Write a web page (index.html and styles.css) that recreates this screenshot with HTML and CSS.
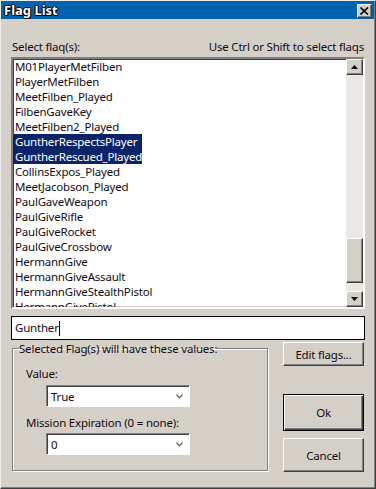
FILE: index.html
```html
<!DOCTYPE html>
<html lang="en">
<head>
    <meta charset="UTF-8">
    <title>Flag List</title>
    <link rel="stylesheet" href="styles.css">
</head>
<body>

    <div class="window">
        <div class="titlebar">
            <span class="title">Flag List</span>
            <div class="close">
                <svg width="9" height="8" viewBox="0 0 9 8">
                    <path d="M0.5 0.5 L8 7.5 M8 0.5 L0.5 7.5" stroke="#000" stroke-width="1.6"/>
                </svg>
            </div>
        </div>

        <div class="body">
            <div class="hint-row">
                <span>Select flaq(s):</span>
                <span>Use Ctrl or Shift to select flaqs</span>
            </div>

            <div class="listbox">
                <ul class="items">
                    <li>M01PlayerMetFilben</li>
                    <li>PlayerMetFilben</li>
                    <li>MeetFilben_Played</li>
                    <li>FilbenGaveKey</li>
                    <li>MeetFilben2_Played</li>
                    <li class="selected">GuntherRespectsPlayer</li>
                    <li class="selected">GuntherRescued_Played</li>
                    <li>CollinsExpos_Played</li>
                    <li>MeetJacobson_Played</li>
                    <li>PaulGaveWeapon</li>
                    <li>PaulGiveRifle</li>
                    <li>PaulGiveRocket</li>
                    <li>PaulGiveCrossbow</li>
                    <li>HermannGive</li>
                    <li>HermannGiveAssault</li>
                    <li>HermannGiveStealthPistol</li>
                    <li>HermannGivePistol</li>
                </ul>
                <div class="scrollbar">
                    <div class="sb-btn">
                        <svg width="7" height="4" viewBox="0 0 7 4"><path d="M3.5 0 L7 4 L0 4 Z" fill="#000"/></svg>
                    </div>
                    <div class="sb-track">
                        <div class="sb-thumb"></div>
                    </div>
                    <div class="sb-btn">
                        <svg width="7" height="4" viewBox="0 0 7 4"><path d="M0 0 L7 0 L3.5 4 Z" fill="#000"/></svg>
                    </div>
                </div>
            </div>

            <div class="search">Gunther<span class="caret"></span></div>

            <div class="lower">
                <fieldset class="group">
                    <legend>Selected Flag(s) will have these values:</legend>
                    <div class="field-label">Value:</div>
                    <div class="combo">
                        <span>True</span>
                        <svg width="7" height="5" viewBox="0 0 7 5"><path d="M0.5 0.8 L3.5 3.8 L6.5 0.8" fill="none" stroke="#666" stroke-width="1.4"/></svg>
                    </div>
                    <div class="field-label second">Mission Expiration (0 = none):</div>
                    <div class="combo">
                        <span>0</span>
                        <svg width="7" height="5" viewBox="0 0 7 5"><path d="M0.5 0.8 L3.5 3.8 L6.5 0.8" fill="none" stroke="#666" stroke-width="1.4"/></svg>
                    </div>
                </fieldset>

                <div class="buttons">
                    <div class="btn edit">Edit flags...</div>
                    <div class="btn ok">Ok</div>
                    <div class="btn cancel">Cancel</div>
                </div>
            </div>
        </div>
    </div>

</body>
</html>
```

FILE: styles.css
```css
body {
    margin: 0;
    background: #d4d0c8;
    font-family: "Noto Sans", "Open Sans", sans-serif;
    font-size: 11.5px;
    letter-spacing: -0.2px;
    color: #140a14;
}

.window {
    width: 376px;
    height: 489px;
    box-sizing: border-box;
    background: #d4d0c8;
    border-top: 1px solid #eeeeee;
    border-left: 1px solid #eeeeee;
    border-right: 1px solid #404040;
    border-bottom: 1px solid #404040;
    box-shadow: inset -1px -1px 0 #808080;
}

.titlebar {
    height: 18px;
    margin-right: 1px;
    background: #0063b1;
    display: flex;
    align-items: center;
    justify-content: space-between;
    padding: 0 2px 0 3px;
}

.title {
    color: #fff;
    font-weight: bold;
    font-size: 13px;
    letter-spacing: 0;
    line-height: 18px;
    text-shadow: 1px 1px 0 #000, -1px 0 0 #000, 1px 0 0 #000, 0 -1px 0 #000, 0 1px 0 #000;
}

.close {
    width: 15px;
    height: 14px;
    box-sizing: border-box;
    background: #d4d0c8;
    border: 1px solid;
    border-color: #fff #404040 #404040 #fff;
    box-shadow: inset -1px -1px 0 #808080;
    display: flex;
    align-items: center;
    justify-content: center;
    margin-top: 1px;
}

.body {
    padding: 20px 10px 0 10px;
}

.hint-row {
    display: flex;
    justify-content: space-between;
    line-height: 15px;
    padding: 0 1px 0 1px;
}

.listbox {
    margin-top: 3px;
    height: 252px;
    box-sizing: border-box;
    background: #fff;
    border: 2px solid;
    border-color: #808080 #fff #fff #808080;
    box-shadow: inset 1px 1px 0 #404040, inset -1px -1px 0 #d4d0c8;
    display: flex;
    overflow: hidden;
}

.items {
    flex: 1;
    list-style: none;
    margin: 0;
    padding: 0;
    overflow: hidden;
}

.items li {
    height: 15px;
    line-height: 15px;
    width: 127px;
    padding-left: 2px;
    white-space: nowrap;
}

.items li.selected {
    background: #0a246a;
    color: #fff;
}

.scrollbar {
    width: 17px;
    display: flex;
    flex-direction: column;
    background: #eae8e4;
}

.sb-btn {
    height: 16px;
    box-sizing: border-box;
    background: #d4d0c8;
    border: 1px solid;
    border-color: #fff #404040 #404040 #fff;
    box-shadow: inset -1px -1px 0 #808080;
    display: flex;
    align-items: center;
    justify-content: center;
}

.sb-track {
    flex: 1;
    padding-top: 163px;
}

.sb-thumb {
    height: 45px;
    box-sizing: border-box;
    background: #d4d0c8;
    border: 1px solid;
    border-color: #fff #404040 #404040 #fff;
    box-shadow: inset -1px -1px 0 #808080;
}

.search {
    margin-top: 7px;
    height: 24px;
    box-sizing: border-box;
    background: #fff;
    border: 1px solid #000;
    padding-left: 3px;
    line-height: 22px;
    display: flex;
    align-items: center;
}

.caret {
    width: 1px;
    height: 15px;
    background: #000;
}

.lower {
    display: flex;
    justify-content: space-between;
    align-items: flex-start;
    padding: 0 1px;
}

.group {
    margin: 1px 0 0 0;
    padding: 10px 13px 0 13px;
    width: 256px;
    height: 130px;
    box-sizing: border-box;
    border: 1px solid #808080;
    box-shadow: inset 1px 1px 0 #fff, 1px 1px 0 #fff;
}

.group legend {
    padding: 0;
    margin-left: -7px;
    line-height: 15px;
}

.field-label {
    line-height: 15px;
}

.field-label.second {
    margin-top: 8px;
}

.combo {
    margin: 4px 0 0 20px;
    width: 144px;
    height: 22px;
    box-sizing: border-box;
    background: #fff;
    border: 1px solid;
    border-color: #808080 #fff #fff #808080;
    box-shadow: inset 1px 1px 0 #404040;
    display: flex;
    align-items: center;
    justify-content: space-between;
    padding: 0 6px 0 4px;
}

.field-label.second + .combo {
    margin-top: 3px;
}

.buttons {
    width: 81px;
    display: flex;
    flex-direction: column;
    padding-top: 2px;
}

.btn {
    box-sizing: border-box;
    background: #d4d0c8;
    border: 1px solid;
    border-color: #fff #404040 #404040 #fff;
    box-shadow: inset -1px -1px 0 #808080;
    display: flex;
    align-items: center;
    justify-content: center;
}

.btn.edit {
    height: 24px;
}

.btn.ok {
    margin-top: 28px;
    height: 37px;
    border: 1px solid #000;
    box-shadow: inset 1px 1px 0 #fff, inset -1px -1px 0 #404040, inset -2px -2px 0 #808080;
}

.btn.cancel {
    margin-top: 7px;
    height: 34px;
}
```
